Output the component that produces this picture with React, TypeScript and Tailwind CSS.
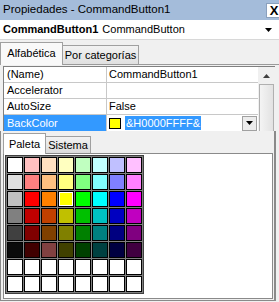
import React from "react";

const palette: string[][] = [
  ["#ffffff", "#ffc0c0", "#ffe0c0", "#ffffc0", "#c0ffc0", "#c0ffff", "#c0c0ff", "#ffc0ff"],
  ["#e0e0e0", "#ff8080", "#ffc080", "#ffff80", "#80ff80", "#80ffff", "#8080ff", "#ff80ff"],
  ["#c0c0c0", "#ff0000", "#ff8000", "#ffff00", "#00ff00", "#00ffff", "#0000ff", "#ff00ff"],
  ["#808080", "#c00000", "#c04000", "#c0c000", "#00c000", "#00c0c0", "#0000c0", "#c000c0"],
  ["#404040", "#800000", "#804000", "#808000", "#008000", "#008080", "#000080", "#800080"],
  ["#0a0a0a", "#400000", "#804040", "#404000", "#004000", "#004040", "#000040", "#400040"],
  ["#ffffff", "#ffffff", "#ffffff", "#ffffff", "#ffffff", "#ffffff", "#ffffff", "#ffffff"],
  ["#ffffff", "#ffffff", "#ffffff", "#ffffff", "#ffffff", "#ffffff", "#ffffff", "#ffffff"],
];

const rows = [
  { name: "(Name)", value: "CommandButton1" },
  { name: "Accelerator", value: "" },
  { name: "AutoSize", value: "False" },
];

const DownArrow = () => (
  <svg width="7" height="4" viewBox="0 0 7 4">
    <path d="M0 0h7L3.5 4z" fill="#000" />
  </svg>
);

const App: React.FC = () => {
  return (
    <div className="relative w-[279px] h-[302px] overflow-hidden bg-[#f0f0f0] text-[11px] leading-none text-black font-['Liberation_Sans',Arial,sans-serif]">
      {/* title bar */}
      <div className="flex h-[20px] items-center justify-between bg-[#a4bcda] pl-[3px]">
        <span className="text-[11.5px]">Propiedades - CommandButton1</span>
        <div className="mr-[-3px] flex h-[15px] w-[16px] items-center justify-center border border-[#8aa0bd] bg-white text-[13px] font-bold">
          X
        </div>
      </div>

      {/* object combo */}
      <div className="flex h-[20px] items-center border-b border-[#d8d8d8] bg-white pl-[3px] pr-[7px]">
        <span className="font-bold">CommandButton1</span>
        <span className="ml-[4px]">CommandButton</span>
        <span className="ml-auto">
          <DownArrow />
        </span>
      </div>

      {/* tabs */}
      <div className="mt-[2px] flex h-[22px] items-end">
        <div className="z-10 -mb-[1px] flex h-[23px] w-[63px] items-center justify-center border border-b-0 border-[#a0a0a0] bg-[#f9f9f9] pb-[1px]">
          Alfabética
        </div>
        <div className="flex h-[19px] w-[76px] items-center justify-center whitespace-nowrap border border-l-0 border-b-0 border-[#a0a0a0] bg-gradient-to-b from-[#f2f2f2] to-[#e0e0e0]">
          Por categorías
        </div>
      </div>

      {/* property grid */}
      <div className="border-t border-[#9a9a9a] bg-[#f0f0f0] pl-[3px] pt-[1px]">
        <div className="flex">
          <div className="w-[255px] border-l border-t border-[#808080] bg-white">
            {rows.map((r) => (
              <div key={r.name} className="flex h-[16px] border-b border-[#c8c8c8]">
                <div className="flex w-[103px] items-center border-r border-[#c8c8c8] pl-[3px]">
                  {r.name}
                </div>
                <div className="flex items-center pl-[2px]">{r.value}</div>
              </div>
            ))}
            <div className="flex h-[16px]">
              <div className="flex w-[103px] items-center border-r border-[#c8c8c8] bg-[#3399ff] pl-[3px] text-white">
                BackColor
              </div>
              <div className="flex flex-1 items-center">
                <div className="ml-[2px] h-[11px] w-[12px] border border-black bg-[#ffff00]" />
                <span className="ml-[4px] flex h-[14px] items-center bg-[#3399ff] px-[1px] text-white">
                  &amp;H0000FFFF&amp;
                </span>
                <div className="ml-auto mr-[1px] flex h-[15px] w-[15px] items-center justify-center border border-[#a0a0a0] bg-[#ececec]">
                  <DownArrow />
                </div>
              </div>
            </div>
          </div>
          {/* scrollbar */}
          <div className="w-[17px] border-t border-[#808080] bg-[#f0f0f0]">
            <div className="flex h-[17px] items-center justify-center">
              <svg width="7" height="4" viewBox="0 0 7 4">
                <path d="M3.5 0L7 4H0z" fill="#404040" />
              </svg>
            </div>
            <div className="mx-[1px] h-[60px] border border-[#b0b0b0] bg-gradient-to-r from-[#f4f4f4] to-[#e2e2e2]" />
          </div>
        </div>
      </div>

      {/* colour drop-down */}
      <div className="absolute left-0 top-[131px] h-[170px] w-[276px] border-b border-l border-r-2 border-[#8a8a8a] bg-[#f0f0f0] pl-[2px]">
        <div className="flex h-[22px] items-end">
          <div className="z-10 -mb-[1px] flex h-[21px] w-[43px] items-center justify-center border border-b-0 border-[#a0a0a0] bg-white">
            Paleta
          </div>
          <div className="flex h-[17px] w-[45px] items-center justify-center border border-l-0 border-b-0 border-[#a0a0a0] bg-gradient-to-b from-[#f2f2f2] to-[#dcdcdc]">
            Sistema
          </div>
        </div>
        <div className="h-[146px] w-[270px] border border-[#8a8a8a] bg-white pl-[1px] pt-[1px]">
          <div className="grid w-[139px] grid-cols-8 gap-[1px] border border-[#404040] bg-[#808080] p-[1px]">
            {palette.flatMap((row, ri) =>
              row.map((c, ci) => {
                const sel = ri === 2 && ci === 3;
                return (
                  <div
                    key={ri + "-" + ci}
                    className={
                      sel
                        ? "h-[16px] border border-black outline outline-1 -outline-offset-2 outline-white"
                        : "h-[16px] border border-black"
                    }
                    style={{ backgroundColor: c }}
                  />
                );
              })
            )}
          </div>
        </div>
      </div>
    </div>
  );
};

export default App;
